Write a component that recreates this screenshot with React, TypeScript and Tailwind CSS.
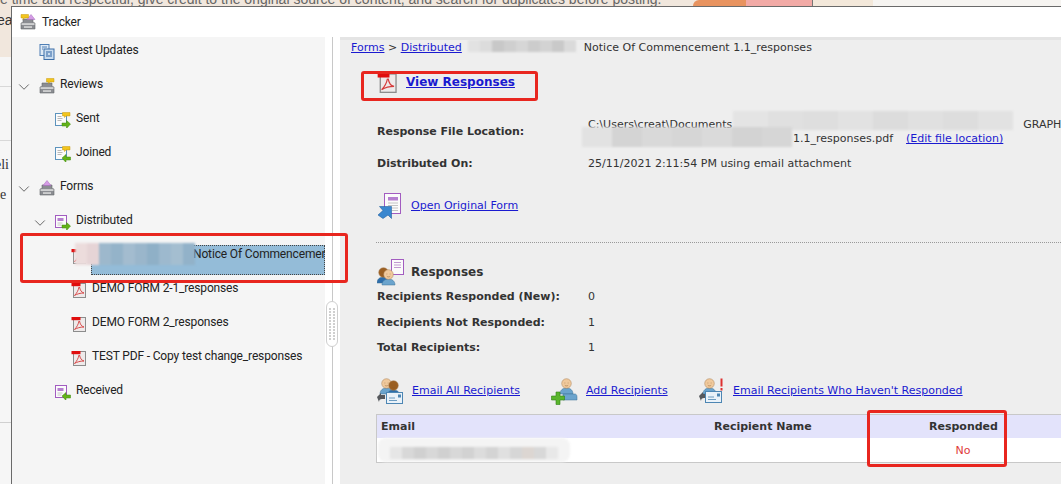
import { ChevronDown } from 'lucide-react';
import type { ReactNode } from 'react';

const treeFont = "font-['Roboto','Noto_Sans',sans-serif] tracking-[-0.15px]";
const panelFont = "font-['DejaVu_Sans','Liberation_Sans',sans-serif]";

function Svg({ size = 16, box = 16, children }: { size?: number; box?: number; children: ReactNode }) {
  return (
    <svg width={size} height={size} viewBox={`0 0 ${box} ${box}`} className="shrink-0">
      {children}
    </svg>
  );
}

function Tray() {
  return (
    <g>
      <path d="M3 5h10v3.500l2 .5v6H1V9l2-.5z" fill="#8b8d92" stroke="#66686c" strokeWidth="0.600" />
      <rect x="1.500" y="9.300" width="13" height="1.500" fill="#e2e2e2" />
      <rect x="4" y="12.300" width="8" height="1.500" fill="#dddddd" />
    </g>
  );
}

function Bubble({ x = 0, y = 0 }: { x?: number; y?: number }) {
  return (
    <g transform={`translate(${x} ${y})`}>
      <path d="M0 0h7.500v3.400h-4L2 5V3.400H0z" fill="#f2c51e" stroke="#c99a10" strokeWidth="0.500" />
    </g>
  );
}

function Peak({ x = 0, y = 0 }: { x?: number; y?: number }) {
  return <path transform={`translate(${x} ${y})`} d="M4 0l4 5H0z" fill="#d59ce6" stroke="#a567bb" strokeWidth="0.500" />;
}

function Sheet({ purple = false }: { purple?: boolean }) {
  return (
    <g>
      <rect x="0.500" y="1.500" width="11" height="12" fill="#fbfbfb" stroke={purple ? '#a25cc0' : '#5c93bd'} />
      {purple ? (
        <rect x="2.500" y="4" width="6" height="3" fill="#b57fd0" />
      ) : (
        <path d="M2.500 4.500h4M2.500 6.500h5M2.500 8.500h4" stroke="#b8b8b8" />
      )}
      {purple && <path d="M2.500 9h5M2.500 11h4" stroke="#c4c4c4" />}
    </g>
  );
}

function GreenArrow({ back = false }: { back?: boolean }) {
  return (
    <path
      d={back ? 'M7 12l4-3.500V11h4.500v3H11v2.500z' : 'M15.500 12l-4-3.500V11H7v3h4.500v2.500z'}
      fill="#63b319"
      stroke="#3f8a0c"
      strokeWidth="0.500"
    />
  );
}

function TrackerIcon() {
  return (
    <Svg>
      <Tray />
      <Peak x={7} y={0.500} />
      <Bubble x={1} y={0.500} />
    </Svg>
  );
}

function UpdatesIcon() {
  return (
    <Svg>
      <rect x="1" y="0.500" width="9" height="11" fill="#dfeaf5" stroke="#4f7fb5" />
      <rect x="5" y="5" width="10" height="10.500" fill="#c9dcef" stroke="#3c6ea8" />
      <path d="M3 3h5M3 5h1" stroke="#4f7fb5" />
      <path d="M7 8h6M7 10h2M11 10h2M7 12h6" stroke="#2f62a3" strokeWidth="1.200" />
    </Svg>
  );
}

function ReviewsIcon() {
  return (
    <Svg>
      <Tray />
      <Bubble x={7.500} y={0.500} />
    </Svg>
  );
}

function FormsIcon() {
  return (
    <Svg>
      <Tray />
      <Peak x={4} y={0.500} />
    </Svg>
  );
}

function ReviewItemIcon({ back = false }: { back?: boolean }) {
  return (
    <Svg>
      <Sheet />
      <Bubble x={7.500} y={0.500} />
      <GreenArrow back={back} />
    </Svg>
  );
}

function FormItemIcon({ back = false }: { back?: boolean }) {
  return (
    <Svg>
      <Sheet purple />
      <GreenArrow back={back} />
    </Svg>
  );
}

function PdfIcon({ size = 16 }: { size?: number }) {
  return (
    <Svg size={size}>
      <rect x="2.500" y="1.500" width="12" height="14" fill="#eeeaea" stroke="#8c8c8c" />
      <rect x="0.500" y="1" width="9" height="3.200" fill="#e00d0d" />
      <path d="M8 5c-.6 3-2 6-4.500 8.500C6 12 9 11 13 11c-2.500-.5-4-3-4.500-6" fill="none" stroke="#d63b3b" strokeWidth="0.900" />
    </Svg>
  );
}

function OpenFormIcon() {
  return (
    <Svg size={26} box={26}>
      <rect x="7.500" y="0.500" width="16" height="20" fill="#fbfbfb" stroke="#a25cc0" />
      <rect x="11" y="4" width="10" height="3.500" fill="#b57fd0" />
      <path d="M11 10h10M11 12.500h10M15 15h6M15 17.500h6" stroke="#c4c4c4" />
      <path d="M14.500 13.500v12l-3.500-3.500-5 3.500-5-3.500 5-4.500-3.500-4z" fill="#3a87cf" stroke="#215f9f" strokeWidth="0.600" />
    </Svg>
  );
}

function Person({ x, y, skin = '#f0c99c', shirt = '#6ba4cd' }: { x: number; y: number; skin?: string; shirt?: string }) {
  return (
    <g transform={`translate(${x} ${y})`}>
      <path d="M0 16c0-4 3-6 6.500-6s6.500 2 6.500 6z" fill={shirt} stroke="#3f7397" strokeWidth="0.500" />
      <circle cx="6.500" cy="5.500" r="4.800" fill={skin} stroke="#a98056" strokeWidth="0.500" />
      <path d="M4.500 5h.8M7.700 5h.8M4.800 7.300c1 .8 2.400 .8 3.400 0" stroke="#8a5a2b" strokeWidth="0.500" fill="none" />
    </g>
  );
}

function ResponsesIcon() {
  return (
    <Svg size={27} box={27}>
      <rect x="14.500" y="0.500" width="12" height="15" fill="#fbfbfb" stroke="#a25cc0" />
      <path d="M17 3.500h7M17 6h7M17 8.500h7" stroke="#c09ad0" />
      <Person x={0} y={8} skin="#9b5f22" shirt="#2d6dab" />
      <Person x={5} y={10} />
    </Svg>
  );
}

function Envelope({ x, y }: { x: number; y: number }) {
  return (
    <g transform={`translate(${x} ${y})`}>
      <rect x="0.500" y="0.500" width="16" height="11" fill="#eaf2f9" stroke="#4d86b3" />
      <rect x="12" y="2.500" width="3" height="3" fill="#4d86b3" />
      <path d="M3 6h6M3 8.500h8" stroke="#6d9cc0" />
    </g>
  );
}

function EmailAllIcon() {
  return (
    <Svg size={27} box={27}>
      <Person x={3} y={0} />
      <Person x={10} y={2} skin="#9b5f22" shirt="#2d6dab" />
      <path d="M0 19l4-4v2h4v4H5c-2 0-3 1-3 3z" fill="#55585c" />
      <Envelope x={9} y={14} />
    </Svg>
  );
}

function AddIcon() {
  return (
    <Svg size={27} box={27}>
      <Person x={9} y={0} />
      <path d="M12 16h12c1 0 2 1 2 3v3H12z" fill="#6ba4cd" stroke="#3f7397" strokeWidth="0.500" />
      <path d="M5 14h4v4h4.500v4H9v4.500H5V22H.5v-4H5z" fill="#5ab52c" stroke="#2f8217" strokeWidth="0.600" />
    </Svg>
  );
}

function EmailMissingIcon() {
  return (
    <Svg size={27} box={27}>
      <Person x={4} y={0} />
      <path d="M0 18l4-4v2h4v4H5c-2 0-3 1-3 3z" fill="#55585c" />
      <Envelope x={6} y={13} />
      <rect x="21.500" y="0.500" width="2" height="8" fill="#dd3030" />
      <rect x="21.500" y="10" width="2" height="2.500" fill="#dd3030" />
    </Svg>
  );
}

type Row = { label: string; Icon: () => ReactNode; indent: number; chevron?: boolean };

const rows: Row[] = [
  { label: 'Latest Updates', Icon: UpdatesIcon, indent: 27 },
  { label: 'Reviews', Icon: ReviewsIcon, indent: 27, chevron: true },
  { label: 'Sent', Icon: () => <ReviewItemIcon />, indent: 43 },
  { label: 'Joined', Icon: () => <ReviewItemIcon back />, indent: 43 },
  { label: 'Forms', Icon: FormsIcon, indent: 27, chevron: true },
  { label: 'Distributed', Icon: () => <FormItemIcon />, indent: 43, chevron: true },
];

const lowerRows: Row[] = [
  { label: 'DEMO FORM 2-1_responses', Icon: () => <PdfIcon />, indent: 59 },
  { label: 'DEMO FORM 2_responses', Icon: () => <PdfIcon />, indent: 59 },
  { label: 'TEST PDF - Copy test change_responses', Icon: () => <PdfIcon />, indent: 59 },
  { label: 'Received', Icon: () => <FormItemIcon back />, indent: 43 },
];

function TreeRow({ label, Icon, indent, chevron }: Row) {
  return (
    <div className="relative flex h-[34px] items-start whitespace-nowrap pt-[5px]" style={{ paddingLeft: indent }}>
      {chevron && <ChevronDown size={18} strokeWidth={1.3} color="#666" className="absolute top-[7px]" style={{ left: indent - 24 }} />}
      <div className="mt-[2px]">
        <Icon />
      </div>
      <span className="ml-[5px] text-[12px] leading-[16px] text-[#222]">{label}</span>
    </div>
  );
}

// pixelated smudge that hides names in the screenshot
function Mosaic({ cells, cellW, height, className }: { cells: string[]; cellW: number; height: number; className: string }) {
  return (
    <div className={`absolute flex blur-[1px] ${className}`}>
      {cells.map((color, i) => (
        <div key={i} style={{ width: cellW, height, backgroundColor: color }} />
      ))}
    </div>
  );
}

function InfoRow({ label, children, className = '' }: { label: string; children: ReactNode; className?: string }) {
  return (
    <div className={`flex text-[11px] leading-[14px] text-[#333] ${className}`}>
      <div className="w-[211px] shrink-0 font-bold">{label}</div>
      <div>{children}</div>
    </div>
  );
}

const linkClass = 'text-[#1a1ad0] underline';

export default function App() {
  return (
    <div className="relative flex h-[484px] w-[1061px] flex-col overflow-hidden bg-white">
      {/* page behind the dialog */}
      <div className="flex h-[6px] shrink-0 overflow-hidden bg-[#f1e7dd]">
        <div className="-mt-[9px] w-[693px] shrink-0 whitespace-nowrap font-['Liberation_Sans',sans-serif] text-[14px] leading-[16px] text-[#666]">
          e time and respectful, give credit to the original source of content, and search for duplicates before posting.
        </div>
        <div className="w-[53px] shrink-0 rounded-tl-[8px] bg-[#e8935f]" />
        <div className="w-[67px] shrink-0 border-r border-[#777] bg-[#f2aaa6]" />
        <div className="w-[60px] shrink-0 bg-[#f3e8da]" />
        <div className="flex-1 bg-[#f6f4f1]" />
      </div>

      <div className="flex min-h-0 flex-1">
        <div className="w-[11px] shrink-0 overflow-hidden bg-[#f6f6f6] font-['Liberation_Serif',serif] text-[14px] leading-[16px] text-[#333]">
          <div className="h-[51px] bg-[#f1e7dd] pt-[6px]">
            <span className="-ml-[3px] block font-['Liberation_Sans',sans-serif]">ea</span>
          </div>
          <div className="h-[30px] border-b border-[#d8d8d8]" />
          <div className="h-[54px] border-b border-[#d8d8d8]" />
          <div className="-ml-[5px] mt-[16px] whitespace-nowrap">eli</div>
          <div className="-ml-[7px] mt-[14px] whitespace-nowrap">he</div>
          <div className="mt-[219px] border-b border-[#d0d0d0]" />
        </div>

        {/* Tracker window */}
        <div className="flex min-w-0 flex-1 flex-col border-l border-t border-[#6a6a6a] bg-white">
          <div className={`flex h-[30px] shrink-0 items-center gap-[6px] pl-[8px] text-[12px] text-[#222] ${treeFont}`}>
            <TrackerIcon />
            Tracker
          </div>

          <div className="flex min-h-0 flex-1">
            {/* left tree */}
            <div className={`relative w-[313px] shrink-0 overflow-hidden bg-[#f5f5f5] ${treeFont}`}>
              {rows.map((row) => (
                <TreeRow key={row.label} {...row} />
              ))}
              <div className="relative flex h-[34px] items-start whitespace-nowrap pl-[59px] pt-[5px]">
                <div className="mt-[2px]">
                  <PdfIcon />
                </div>
                <div className="absolute bottom-0 left-[79px] right-0 top-[4px] border border-dotted border-[#444] bg-[#94bcd8]" />
                <span className="relative ml-[106px] text-[12px] leading-[16px] text-[#222]">Notice Of Commencement 1.1_responses</span>
              </div>
              {lowerRows.map((row) => (
                <TreeRow key={row.label} {...row} />
              ))}
              <Mosaic
                className="left-[63px] top-[206px]"
                cellW={12}
                height={22}
                cells={['#ecdcdc', '#e6d4d6', '#9db8cc', '#94b3c9', '#a3bccf', '#9ab6cb', '#8fb0c7', '#9db9ce', '#a4bed0', '#92b2c9']}
              />
            </div>

            {/* splitter */}
            <div className="relative flex w-[15px] shrink-0 justify-center bg-white">
              <div className="ml-[-1px] w-px bg-[#c8c8c8]" />
              <div className="absolute left-[1px] top-[264px] grid h-[46px] w-[12px] grid-cols-2 content-center justify-center gap-px rounded-[6px] border border-[#cfcfcf] bg-white px-[2px]">
                {Array.from({ length: 22 }).map((_, i) => (
                  <span key={i} className="h-[2px] w-[2px] bg-[#cfcfcf]" />
                ))}
              </div>
            </div>

            {/* right panel */}
            <div className={`relative min-w-0 flex-1 overflow-hidden border-t-[3px] border-[#e4e4e4] bg-[#eeeeee] ${panelFont}`}>
              <div className="whitespace-nowrap pl-[11px] pt-[1px] text-[11px] leading-[14px] text-[#333]">
                <a className={linkClass}>Forms</a> &gt; <a className={linkClass}>Distributed</a>
                <span className="ml-[122px]">Notice Of Commencement 1.1_responses</span>
              </div>

              <div className="pl-[37px]">
                <div className="mt-[15px] flex h-[24px] items-center gap-[8px]">
                  <PdfIcon size={21} />
                  <a className={`${linkClass} text-[12px] font-bold`}>View Responses</a>
                </div>

                <InfoRow label="Response File Location:" className="mt-[31px]">
                  <div className="-mt-[7px] w-[473px] whitespace-nowrap">
                    <div>C:\Users\creat\Documents<span className="ml-[291px]">GRAPH</span></div>
                    <div className="pl-[205px]">
                      1.1_responses.pdf
                      <a className={`${linkClass} ml-[13px]`}>(Edit file location)</a>
                    </div>
                  </div>
                </InfoRow>
                <InfoRow label="Distributed On:" className="mt-[11px]">
                  25/11/2021 2:11:54 PM using email attachment
                </InfoRow>

                <div className="mt-[22px] flex items-center gap-[8px]">
                  <OpenFormIcon />
                  <a className={`${linkClass} text-[11px]`}>Open Original Form</a>
                </div>

                <div className="-ml-px mt-[23px] border-t border-dotted border-[#999]" />

                <div className="mt-[16px] flex h-[26px] items-center gap-[7px]">
                  <ResponsesIcon />
                  <span className="text-[12px] font-bold text-[#333]">Responses</span>
                </div>
                <InfoRow label="Recipients Responded (New):" className="mt-[5px]">0</InfoRow>
                <InfoRow label="Recipients Not Responded:" className="mt-[12px]">1</InfoRow>
                <InfoRow label="Total Recipients:" className="mt-[11px]">1</InfoRow>

                <div className="mt-[23px] flex h-[27px] items-center text-[11px]">
                  <div className="flex w-[174px] items-center gap-[8px]">
                    <EmailAllIcon />
                    <a className={linkClass}>Email All Recipients</a>
                  </div>
                  <div className="flex w-[148px] items-center gap-[8px]">
                    <AddIcon />
                    <a className={linkClass}>Add Recipients</a>
                  </div>
                  <div className="flex items-center gap-[7px]">
                    <EmailMissingIcon />
                    <a className={`${linkClass} whitespace-nowrap`}>Email Recipients Who Haven't Responded</a>
                  </div>
                </div>

                <div className="-ml-px mt-[9px] border-y border-l border-[#c8c8c8] text-[11px] leading-[14px]">
                  <div className="flex h-[23px] items-center bg-[#e3e3fb] pl-[4px] font-bold text-[#333]">
                    <div className="w-[333px]">Email</div>
                    <div className="w-[215px]">Recipient Name</div>
                    <div className="w-[68px] whitespace-nowrap">Responded</div>
                  </div>
                  <div className="flex h-[24px] items-center justify-start bg-white pl-[552px] pt-[1px] text-[#e03a3a]">
                    <div className="w-[68px] text-center">No</div>
                  </div>
                </div>
              </div>

              <Mosaic
                className="left-[128px] top-0"
                cellW={12}
                height={12}
                cells={['#e2e2e2', '#dcdcdc', '#c8c8c8', '#cfcfcf', '#d6d6d6', '#cccccc', '#d3d3d3', '#c9c9c9', '#dadada']}
              />
              <Mosaic
                className="left-[393px] top-[71px]"
                cellW={35}
                height={19}
                cells={['#e4e4e4', '#e0e0e0', '#dedede', '#e2e2e2', '#dcdcdc', '#e0e0e0', '#dddddd', '#e2e2e2']}
              />
              <Mosaic
                className="left-[242px] top-[87px]"
                cellW={30}
                height={20}
                cells={['#e2e2e2', '#d4d4d4', '#d9d9d9', '#d6d6d6', '#dadada', '#d3d3d3', '#d6d6d6']}
              />
              <div className="absolute left-[38px] top-[398px] h-[24px] w-[192px] rounded-[8px] bg-[#f4f4f4] blur-[1px]" />
              <Mosaic
                className="left-[50px] top-[407px]"
                cellW={12}
                height={12}
                cells={['#e6e6e6', '#d8d8d8', '#d0d0d0', '#d8d8d8', '#d0d0d0', '#d8d8d8', '#d2d2d2', '#dcdcdc', '#d4d4d4', '#e0e0e0', '#d6d6d6', '#dcd6d2', '#d8d8d8', '#e8e8e8']}
              />
            </div>
          </div>
        </div>
      </div>

      {/* red annotation boxes */}
      <div className="absolute left-[361px] top-[71px] h-[30px] w-[177px] rounded-[3px] border-[3px] border-[#e8261f]" />
      <div className="absolute left-[20px] top-[233px] h-[50px] w-[328px] rounded-[3px] border-[3px] border-[#e8261f]" />
      <div className="absolute left-[867px] top-[410px] h-[57px] w-[140px] rounded-[3px] border-[3px] border-[#e8261f]" />
    </div>
  );
}
